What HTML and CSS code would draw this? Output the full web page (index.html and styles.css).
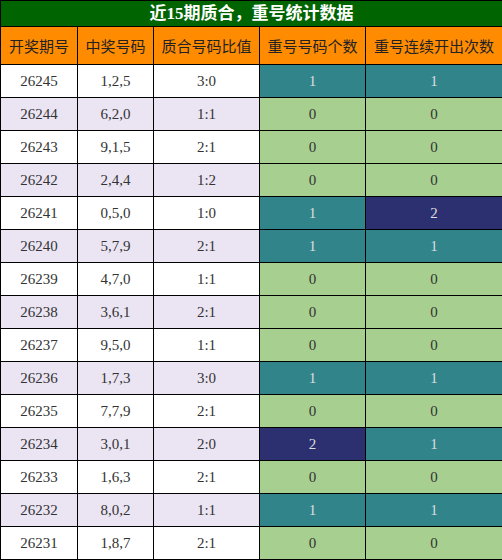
FILE: index.html
```html
<!DOCTYPE html>
<html lang="zh">
<head>
  <meta charset="UTF-8">
  <title>近15期质合，重号统计数据</title>
  <link rel="stylesheet" href="styles.css">
</head>
<body>

<table class="stats">
  <colgroup>
    <col class="c-issue">
    <col class="c-nums">
    <col class="c-ratio">
    <col class="c-repeat">
    <col class="c-streak">
  </colgroup>
  <thead>
    <tr class="title-row"><th colspan="5">近15期质合，重号统计数据</th></tr>
    <tr class="head-row">
      <th>开奖期号</th>
      <th>中奖号码</th>
      <th>质合号码比值</th>
      <th>重号号码个数</th>
      <th>重号连续开出次数</th>
    </tr>
  </thead>
  <tbody>
    <tr><td>26245</td><td>1,2,5</td><td>3:0</td><td class="teal">1</td><td class="teal">1</td></tr>
    <tr><td>26244</td><td>6,2,0</td><td>1:1</td><td class="green">0</td><td class="green">0</td></tr>
    <tr><td>26243</td><td>9,1,5</td><td>2:1</td><td class="green">0</td><td class="green">0</td></tr>
    <tr><td>26242</td><td>2,4,4</td><td>1:2</td><td class="green">0</td><td class="green">0</td></tr>
    <tr><td>26241</td><td>0,5,0</td><td>1:0</td><td class="teal">1</td><td class="navy">2</td></tr>
    <tr><td>26240</td><td>5,7,9</td><td>2:1</td><td class="teal">1</td><td class="teal">1</td></tr>
    <tr><td>26239</td><td>4,7,0</td><td>1:1</td><td class="green">0</td><td class="green">0</td></tr>
    <tr><td>26238</td><td>3,6,1</td><td>2:1</td><td class="green">0</td><td class="green">0</td></tr>
    <tr><td>26237</td><td>9,5,0</td><td>1:1</td><td class="green">0</td><td class="green">0</td></tr>
    <tr><td>26236</td><td>1,7,3</td><td>3:0</td><td class="teal">1</td><td class="teal">1</td></tr>
    <tr><td>26235</td><td>7,7,9</td><td>2:1</td><td class="green">0</td><td class="green">0</td></tr>
    <tr><td>26234</td><td>3,0,1</td><td>2:0</td><td class="navy">2</td><td class="teal">1</td></tr>
    <tr><td>26233</td><td>1,6,3</td><td>2:1</td><td class="green">0</td><td class="green">0</td></tr>
    <tr><td>26232</td><td>8,0,2</td><td>1:1</td><td class="teal">1</td><td class="teal">1</td></tr>
    <tr><td>26231</td><td>1,8,7</td><td>2:1</td><td class="green">0</td><td class="green">0</td></tr>
  </tbody>
</table>

</body>
</html>
```

FILE: styles.css
```css
* {
  box-sizing: border-box;
}

body {
  margin: 0;
  background: #fff;
  font-family: "Liberation Serif", "Noto Sans CJK SC", serif;
}

.stats {
  width: 502px;
  table-layout: fixed;
  border-collapse: collapse;
  text-align: center;
}

.c-issue { width: 77px; }
.c-nums { width: 76px; }
.c-ratio { width: 106px; }
.c-repeat { width: 106px; }
.c-streak { width: 137px; }

.stats th,
.stats td {
  border: 1px solid #000;
  padding: 0;
}

.title-row th {
  height: 26px;
  background: #006400;
  color: #fff;
  font-size: 17px;
  font-weight: bold;
  line-height: 24px;
}

.head-row th {
  height: 38px;
  background: #ff8c00;
  color: #222;
  font-size: 15px;
  font-weight: normal;
}

.stats td {
  height: 33px;
  font-size: 15px;
  color: #333;
  background: #fff;
}

.stats tbody tr:nth-child(even) td {
  background: #ebe5f3;
}

.stats tbody tr td.green {
  background: #a7cf8f;
  color: #333;
}

.stats tbody tr td.teal {
  background: #31858a;
  color: #ddd;
}

.stats tbody tr td.navy {
  background: #2d3070;
  color: #ddd;
}
```
